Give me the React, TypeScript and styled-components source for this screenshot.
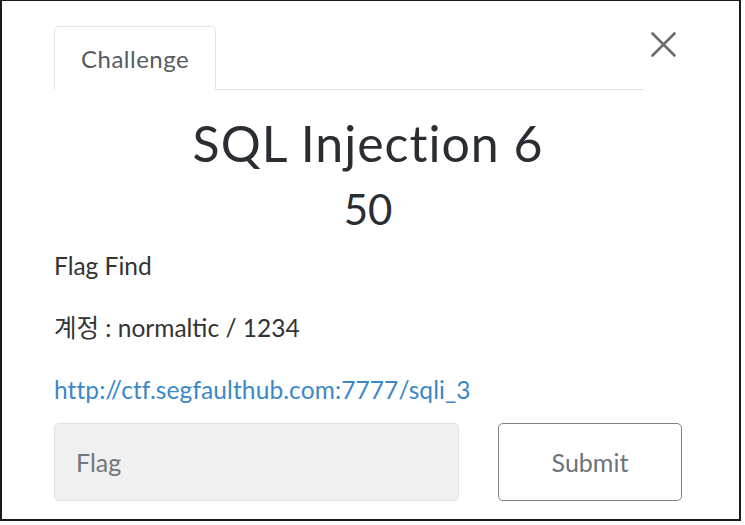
import React from "react";
import styled, { createGlobalStyle } from "styled-components";

const Global = createGlobalStyle`
  html, body { margin: 0; padding: 0; background: #ffffff; }
  body { font-family: Lato, "Noto Sans CJK KR", sans-serif; }
  * { box-sizing: border-box; }
`;

const Frame = styled.div`
  width: 741px;
  height: 521px;
  border: 2px solid #1a1a1a;
  border-top-width: 1px;
  background: #ffffff;
  padding: 25px 57px 0 52px;
  display: flex;
  flex-direction: column;
`;

const Header = styled.div`
  display: flex;
  align-items: flex-start;
`;

const Nav = styled.div`
  flex: 0 0 590px;
  display: flex;
  border-bottom: 1px solid #e1e5ea;
`;

const Tab = styled.div`
  height: 64px;
  margin-bottom: -1px;
  padding: 0 26px 0 26px;
  display: flex;
  align-items: center;
  background: #ffffff;
  border: 1px solid #e1e5ea;
  border-bottom-color: #ffffff;
  border-radius: 5px 5px 0 0;
  font-size: 24px;
  letter-spacing: 0.5px;
  color: #575c62;
`;

const Close = styled.button`
  margin: 6px 0 0 7px;
  padding: 0;
  width: 25px;
  height: 25px;
  border: 0;
  background: transparent;
  display: flex;
  align-items: center;
  justify-content: center;
`;

const Title = styled.h3`
  margin: 23px 0 0 0;
  text-align: center;
  font-size: 50px;
  font-weight: 400;
  line-height: 60px;
  letter-spacing: 1px;
  color: #2a2e33;
`;

const Value = styled.h4`
  margin: 11px 0 0 0;
  text-align: center;
  font-size: 42px;
  font-weight: 400;
  line-height: 50px;
  color: #2a2e33;
`;

const Description = styled.div`
  margin-top: 16px;
`;

const Para = styled.p`
  margin: 0 0 31px 0;
  font-size: 24.5px;
  line-height: 31px;
  color: #333333;
`;

const Link = styled.a`
  color: #3b88c8;
  text-decoration: none;
  letter-spacing: 0.1px;
`;

const SubmitRow = styled.div`
  margin-top: -13px;
  display: grid;
  grid-template-columns: 405px 184px;
  column-gap: 39px;
`;

const FlagInput = styled.input`
  height: 78px;
  padding: 0 0 0 21px;
  border: 1px solid #dfe2e6;
  border-radius: 5px;
  background: #f0f0f0;
  font-family: Lato, sans-serif;
  font-size: 25px;
  color: #495057;
  outline: none;
  &::placeholder { color: #72777d; }
`;

const SubmitButton = styled.button`
  height: 78px;
  border: 1.5px solid #7d8389;
  border-radius: 5px;
  background: #ffffff;
  font-family: Lato, sans-serif;
  font-size: 25px;
  color: #6c737a;
`;

export default function App() {
  return (
    <>
      <Global />
      <Frame>
        <Header>
          <Nav>
            <Tab>Challenge</Tab>
          </Nav>
          <Close aria-label="Close">
            <svg width="25" height="25" viewBox="0 0 25 25">
              <path d="M1.5 1.5 L23.5 23.5 M23.5 1.5 L1.5 23.5" stroke="#6b6b6b" strokeWidth="2.6" strokeLinecap="round" fill="none" />
            </svg>
          </Close>
        </Header>
        <Title>SQL Injection 6</Title>
        <Value>50</Value>
        <Description>
          <Para>Flag Find</Para>
          <Para>계정 : normaltic / 1234</Para>
          <Para>
            <Link href="#">http://ctf.segfaulthub.com:7777/sqli_3</Link>
          </Para>
        </Description>
        <SubmitRow>
          <FlagInput placeholder="Flag" />
          <SubmitButton>Submit</SubmitButton>
        </SubmitRow>
      </Frame>
    </>
  );
}
